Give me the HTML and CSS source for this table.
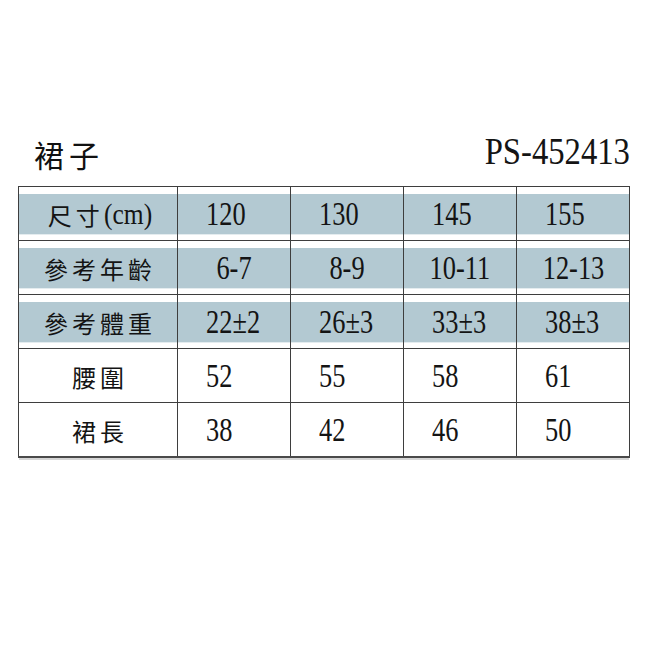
FILE: index.html
```html
<!DOCTYPE html>
<html lang="zh-Hant">
<head>
<meta charset="utf-8">
<title>裙子 PS-452413</title>
<link rel="stylesheet" href="styles.css">
</head>
<body>
<div class="sheet">
  <div class="header">
    <div class="title">裙子</div>
    <div class="code"><span class="narrow">PS-452413</span></div>
  </div>
  <table class="size-table">
    <tr class="banded row-left">
      <th><div class="cell">尺寸<span class="unit">(cm)</span></div></th>
      <td><div class="cell"><span class="num">120</span></div></td>
      <td><div class="cell"><span class="num">130</span></div></td>
      <td><div class="cell"><span class="num">145</span></div></td>
      <td><div class="cell"><span class="num">155</span></div></td>
    </tr>
    <tr class="banded row-center">
      <th><div class="cell">參考年齡</div></th>
      <td><div class="cell"><span class="num">6-7</span></div></td>
      <td><div class="cell"><span class="num">8-9</span></div></td>
      <td><div class="cell"><span class="num">10-11</span></div></td>
      <td><div class="cell"><span class="num">12-13</span></div></td>
    </tr>
    <tr class="banded row-left">
      <th><div class="cell">參考體重</div></th>
      <td><div class="cell"><span class="num">22±2</span></div></td>
      <td><div class="cell"><span class="num">26±3</span></div></td>
      <td><div class="cell"><span class="num">33±3</span></div></td>
      <td><div class="cell"><span class="num">38±3</span></div></td>
    </tr>
    <tr class="row-left">
      <th><div class="cell">腰圍</div></th>
      <td><div class="cell"><span class="num">52</span></div></td>
      <td><div class="cell"><span class="num">55</span></div></td>
      <td><div class="cell"><span class="num">58</span></div></td>
      <td><div class="cell"><span class="num">61</span></div></td>
    </tr>
    <tr class="row-left last">
      <th><div class="cell">裙長</div></th>
      <td><div class="cell"><span class="num">38</span></div></td>
      <td><div class="cell"><span class="num">42</span></div></td>
      <td><div class="cell"><span class="num">46</span></div></td>
      <td><div class="cell"><span class="num">50</span></div></td>
    </tr>
  </table>
</div>
</body>
</html>
```
FILE: styles.css
```css
html, body {
  margin: 0;
  padding: 0;
  background: #ffffff;
}

body {
  width: 650px;
  height: 650px;
  color: #141414;
  font-family: "Liberation Serif", "Noto Sans CJK TC", serif;
}

.sheet {
  padding: 131px 20px 0 18px;
}

.header {
  display: flex;
  justify-content: space-between;
  align-items: flex-end;
  height: 40px;
  margin-bottom: 15px;
}

.title {
  font-family: "Noto Sans CJK TC", sans-serif;
  font-size: 30px;
  line-height: 34px;
  letter-spacing: 5px;
  padding-left: 16px;
  color: #111;
}

.code {
  font-family: "Liberation Serif", serif;
  font-size: 38px;
  line-height: 40px;
}

.code .narrow {
  display: inline-block;
  transform: scaleX(0.86);
  transform-origin: right center;
}

.size-table {
  width: 612px;
  border-collapse: collapse;
  table-layout: fixed;
  border-bottom: 2px solid #4a4a4a;
  box-shadow: 0 3px 0 -1px #d6d6d6;
}

.size-table th,
.size-table td {
  border: 1px solid #3e3e3e;
  padding: 7px 0 6px 0;
  vertical-align: middle;
}

.size-table th {
  width: 158px;
  font-weight: normal;
}

.cell {
  height: 40px;
  display: flex;
  align-items: center;
}

.banded .cell {
  background: #b3c9d2;
  box-shadow: 0 1px 0 #e4ecef;
}

th .cell {
  justify-content: center;
  font-family: "Noto Sans CJK TC", sans-serif;
  font-size: 24px;
  letter-spacing: 4px;
  padding-left: 4px;
}

th .unit {
  display: inline-block;
  font-family: "Liberation Serif", serif;
  font-size: 30px;
  letter-spacing: 0;
  transform: scaleX(0.85);
  transform-origin: left center;
  margin-right: -8px;
}

.num {
  display: inline-block;
  font-family: "Liberation Serif", serif;
  font-size: 33px;
  line-height: 40px;
  transform: scaleX(0.8);
}

.row-left td .cell {
  justify-content: flex-start;
  padding-left: 28px;
}

.row-left .num {
  transform-origin: left center;
}

.row-center td .cell {
  justify-content: center;
}

.row-center .num {
  transform-origin: center center;
}
```
